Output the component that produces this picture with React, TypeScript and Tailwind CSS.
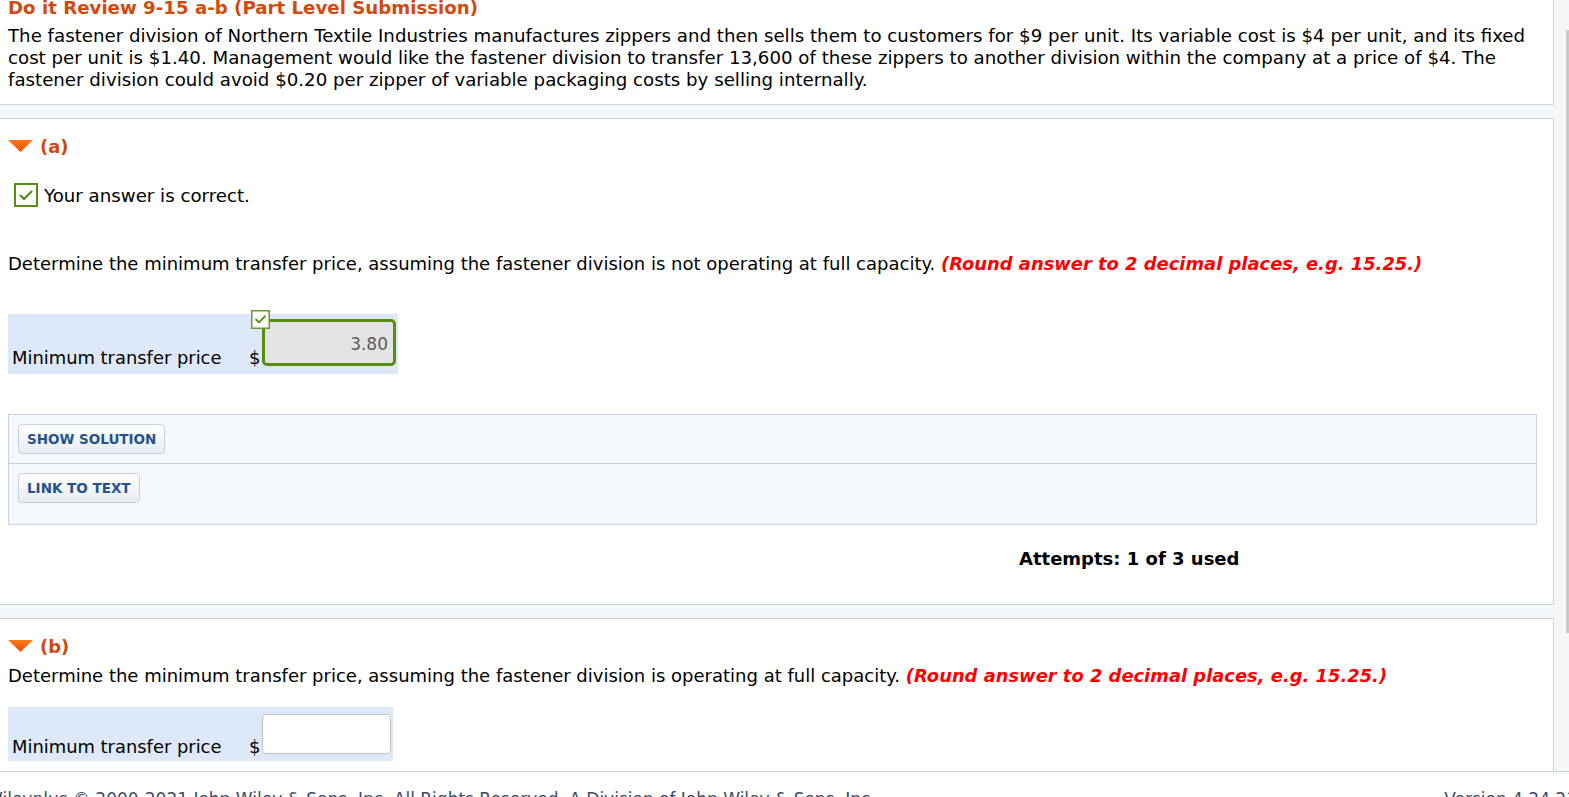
import React from "react";

const font = { fontFamily: '"DejaVu Sans", Verdana, sans-serif' };

function Triangle() {
  return (
    <svg width="25" height="12" viewBox="0 0 25 12" className="block">
      <defs>
        <linearGradient id="tri" x1="0" y1="0" x2="0" y2="1">
          <stop offset="0" stopColor="#ff7a1a" />
          <stop offset="1" stopColor="#e84e00" />
        </linearGradient>
      </defs>
      <polygon points="0,0 25,0 12.5,12" fill="url(#tri)" />
    </svg>
  );
}

function CheckBox({ size }: { size: number }) {
  return (
    <svg width={size} height={size} viewBox="0 0 24 24" className="block">
      <rect x="1" y="1" width="22" height="22" fill="#ffffff" stroke="#5b8c12" strokeWidth="2" />
      <path d="M6.5 12.5 L10 16 L17.5 8.5" fill="none" stroke="#4f8a10" strokeWidth="2" strokeLinecap="round" strokeLinejoin="round" />
    </svg>
  );
}

function SmallCheck() {
  return (
    <svg width="19" height="19" viewBox="0 0 19 19" className="block">
      <rect x="0.75" y="0.75" width="17.5" height="17.5" fill="#ffffff" stroke="#6a9a2a" strokeWidth="1.5" />
      <path d="M5 9.5 L8 12.3 L14 6.3" fill="none" stroke="#4f8a10" strokeWidth="1.8" strokeLinecap="round" strokeLinejoin="round" />
    </svg>
  );
}

function Button({ label }: { label: string }) {
  return (
    <div className="inline-flex h-[30px] items-center rounded-[4px] border border-[#c6d0dc] bg-gradient-to-b from-white to-[#e8ecf1] px-[8px] text-[13.5px] font-bold text-[#24528f]">
      {label}
    </div>
  );
}

export default function App() {
  return (
    <div className="relative min-h-screen overflow-hidden bg-[#f4f7fa] text-black" style={font}>
      <div className="w-[1554px]">
        {/* top panel */}
        <div className="h-[105px] overflow-hidden border-r border-b border-[#cbd3de] bg-white px-[8px]">
          <div className="-mt-[4px] h-[24px] text-[18.2px] font-bold leading-[24px] text-[#d2480d]">
            Do it Review 9-15 a-b (Part Level Submission)
          </div>
          <div className="mt-[5px] text-[18.2px] leading-[22px]">
            The fastener division of Northern Textile Industries manufactures zippers and then sells them to customers for $9 per unit. Its variable cost is $4 per unit, and its fixed
            <br />
            cost per unit is $1.40. Management would like the fastener division to transfer 13,600 of these zippers to another division within the company at a price of $4. The
            <br />
            fastener division could avoid $0.20 per zipper of variable packaging costs by selling internally.
          </div>
        </div>

        {/* panel a */}
        <div className="mt-[13px] h-[487px] border-t border-r border-b border-[#cbd3de] bg-white px-[8px]">
          <div className="mt-[15px] flex h-[24px] items-center gap-[7px]">
            <Triangle />
            <span className="text-[18px] font-bold text-[#d2480d]">(a)</span>
          </div>
          <div className="mt-[25px] flex h-[24px] items-center pl-[6px]">
            <CheckBox size={24} />
            <span className="ml-[6px] mt-[1px] text-[18.2px]">Your answer is correct.</span>
          </div>
          <div className="mt-[46px] h-[22px] text-[18px] leading-[22px]">
            Determine the minimum transfer price, assuming the fastener division is not operating at full capacity.{" "}
            <span className="text-[17.9px] font-bold italic text-[#ff0000]">(Round answer to 2 decimal places, e.g. 15.25.)</span>
          </div>
          <div className="mt-[39px] flex h-[60px] w-[390px] items-end bg-[#dde8f8] pb-[8px] pl-[4px]">
            <span className="mb-[-3px] w-[237px] text-[17.9px] leading-[22px]">Minimum transfer price</span>
            <span className="mb-[-3px] w-[13px] text-[18px] leading-[22px]">$</span>
            <div className="relative">
              <div className="flex h-[47px] w-[134px] items-start justify-end rounded-[5px] border-[3px] border-[#5b8c12] bg-[#e3e3e3] pr-[5px] pt-[11px] text-[17px] leading-[22px] text-[#5a5a5a]">
                3.80
              </div>
              <div className="absolute -left-[11px] -top-[9px]">
                <SmallCheck />
              </div>
            </div>
          </div>
          <div className="mt-[40px] h-[111px] w-[1529px] border border-[#c9d1dd] bg-[#f4f7fb]">
            <div className="h-[49px] border-b border-[#c9d1dd] pl-[9px] pt-[9px]">
              <Button label="SHOW SOLUTION" />
            </div>
            <div className="pl-[9px] pt-[9px]">
              <Button label="LINK TO TEXT" />
            </div>
          </div>
          <div className="mt-[23px] flex h-[22px] text-[18px] font-bold leading-[22px]">
            <span className="ml-[1011px]">Attempts: 1 of 3 used</span>
          </div>
        </div>

        {/* panel b */}
        <div className="mt-[13px] h-[153px] border-t border-r border-[#cbd3de] bg-white px-[8px]">
          <div className="mt-[15px] flex h-[24px] items-center gap-[7px]">
            <Triangle />
            <span className="text-[18px] font-bold text-[#d2480d]">(b)</span>
          </div>
          <div className="mt-[7px] h-[22px] text-[18px] leading-[22px]">
            Determine the minimum transfer price, assuming the fastener division is operating at full capacity.{" "}
            <span className="text-[17.9px] font-bold italic text-[#ff0000]">(Round answer to 2 decimal places, e.g. 15.25.)</span>
          </div>
          <div className="mt-[20px] flex h-[54px] w-[385px] items-end bg-[#dde8f8] pb-[7px] pl-[4px]">
            <span className="mb-[-4px] w-[237px] text-[17.9px] leading-[22px]">Minimum transfer price</span>
            <span className="mb-[-4px] w-[13px] text-[18px] leading-[22px]">$</span>
            <div className="h-[40px] w-[129px] rounded-[4px] border border-[#c4c4c4] bg-white" />
          </div>
        </div>
      </div>

      {/* footer */}
      <div className="flex h-[40px] justify-between border-t border-[#cbd3de] bg-white pt-[16px] text-[17px] leading-[22px] text-[#3a4a66]">
        <span className="-ml-[14px]">Wileyplus © 2000-2021 John Wiley &amp; Sons, Inc. All Rights Reserved. A Division of John Wiley &amp; Sons, Inc.</span>
        <span className="mr-[-8px]">Version 4.24.21</span>
      </div>

      {/* scrollbar thumb */}
      <div className="absolute right-0 top-[30px] h-[603px] w-[3px] bg-[#c9c9c9]" />
    </div>
  );
}
